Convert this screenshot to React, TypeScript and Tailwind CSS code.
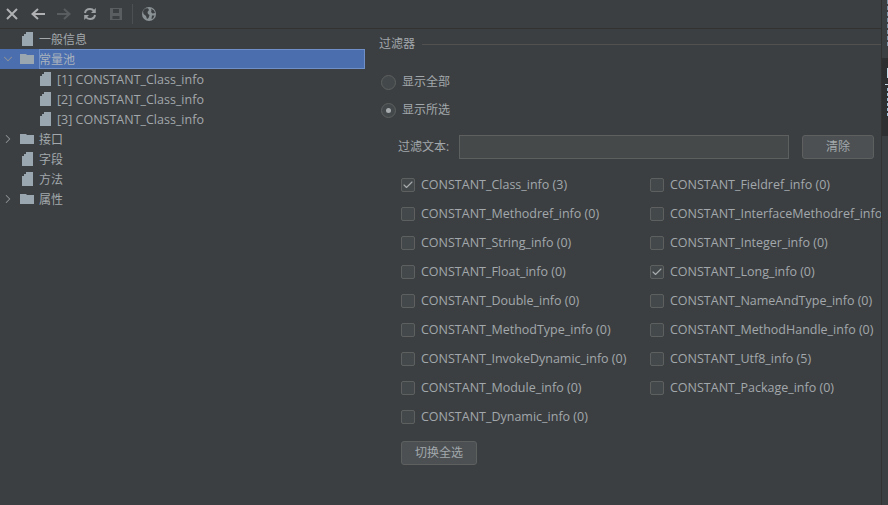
import { Check, ChevronDown, ChevronRight } from "lucide-react";

const font = "font-['Open_Sans','Noto_Sans_CJK_SC',sans-serif]";

function FileIcon() {
  return (
    <svg width="11" height="14" viewBox="0 0 11 14" className="shrink-0">
      <path d="M4 0H11V14H0V4H2V2H4Z" fill="#9aa7b0" />
    </svg>
  );
}
function FolderIcon() {
  return (
    <svg width="14" height="10" viewBox="0 0 14 10" className="shrink-0">
      <path d="M0 0H6L7 1H14V10H0Z" fill="#9aa7b0" />
    </svg>
  );
}

function ToolbarIcons() {
  return (
    <>
      <svg width="26" height="16" viewBox="0 0 26 16" className="-ml-[1px]">
        <path d="M8 3L18 13M18 3L8 13" stroke="#afb1b3" strokeWidth="2" fill="none" />
      </svg>
      <svg width="26" height="16" viewBox="0 0 26 16">
        <path d="M20 8H8M13 3L7.5 8L13 13" stroke="#afb1b3" strokeWidth="2" fill="none" />
      </svg>
      <svg width="26" height="16" viewBox="0 0 26 16">
        <path d="M6 8H18M13 3L18.5 8L13 13" stroke="#5a5d5f" strokeWidth="2" fill="none" />
      </svg>
      <svg width="26" height="16" viewBox="0 0 26 16">
        <path d="M8 7C8.4 4.5 10.5 3 13 3C14.8 3 16.2 3.8 17 5M18 9C17.6 11.5 15.5 13 13 13C11.2 13 9.8 12.2 9 11" stroke="#9da1a3" strokeWidth="2" fill="none" />
        <path d="M18.8 2V7H14ZM7.2 14V9H12Z" fill="#9da1a3" />
      </svg>
      <svg width="26" height="16" viewBox="0 0 26 16">
        <path d="M7 2H19V14H7ZM10 3V7H16V3ZM9.5 10V13H16.5V10Z" fill="#5a5e60" fillRule="evenodd" />
      </svg>
      <div className="ml-[3px] mr-[9px] h-[20px] w-px bg-[#4d5052]" />
      <svg width="14" height="14" viewBox="0 0 14 14" className="shrink-0">
        <circle cx="7" cy="7" r="7" fill="#8a9296" />
        <path d="M3 1.5L6 1.2L7 3L5.5 5L6 7L7.5 8L6.5 11L5 12L4 9L1.5 7L1 4ZM9 1.5L12 3.5L13 6L10.5 6.5L9 5L9.5 3.5ZM10 8.5L12.5 8.5L11 11.5L9.5 12Z" fill="#3c3f41" />
      </svg>
    </>
  );
}

function TreeRow({ label, level = 0, kind, expand, selected }: { label: string; level?: number; kind: "file" | "folder"; expand?: "open" | "closed"; selected?: boolean }) {
  return (
    <div className={`flex h-5 items-center ${selected ? "bg-[#4b6eaf]" : ""}`}>
      <div className="flex w-[16px] shrink-0 items-center justify-center">
        {expand === "open" && <ChevronDown size={14} strokeWidth={1.8} color="#8f9396" />}
        {expand === "closed" && <ChevronRight size={14} strokeWidth={1.8} color="#8f9396" />}
      </div>
      <div className={`flex items-center ${level === 1 ? "w-[41px] pl-[24px]" : kind === "file" ? "w-[23px] pl-[6px]" : "w-[23px] pl-[4px]"}`}>
        {kind === "file" ? <FileIcon /> : <FolderIcon />}
      </div>
      <span className={`h-5 whitespace-nowrap pt-[1px] leading-[20px] ${level === 1 ? "text-[12.5px]" : "text-[12px]"} ${selected ? "flex-1 text-[#a9b3bd] outline outline-1 -outline-offset-1 outline-[#6f8fc9]" : "text-[#a2a8ac]"}`}>{label}</span>
    </div>
  );
}

function Radio({ label, checked }: { label: string; checked?: boolean }) {
  return (
    <div className="flex h-[28px] items-center gap-[6px]">
      <div className="flex h-[15px] w-[15px] items-center justify-center rounded-full border border-[#5e6060] bg-[#43494a]">
        {checked && <div className="h-[5px] w-[5px] rounded-full bg-[#a8adb0]" />}
      </div>
      <span className="text-[12px] text-[#a2a8ac]">{label}</span>
    </div>
  );
}

function Option({ label, checked }: { label: string; checked?: boolean }) {
  return (
    <div className="flex h-[29px] items-center gap-[6px] whitespace-nowrap">
      <div className="flex h-[14px] w-[14px] shrink-0 items-center justify-center rounded-[2px] border border-[#5e6060] bg-[#43494a]">
        {checked && <Check size={12} strokeWidth={2.2} color="#a9adaf" />}
      </div>
      <span className="pt-[2px] text-[12.5px] text-[#a2a8ac]">{label}</span>
    </div>
  );
}

const left = [
  ["CONSTANT_Class_info (3)", true],
  ["CONSTANT_Methodref_info (0)"],
  ["CONSTANT_String_info (0)"],
  ["CONSTANT_Float_info (0)"],
  ["CONSTANT_Double_info (0)"],
  ["CONSTANT_MethodType_info (0)"],
  ["CONSTANT_InvokeDynamic_info (0)"],
  ["CONSTANT_Module_info (0)"],
  ["CONSTANT_Dynamic_info (0)"],
] as [string, boolean?][];
const right = [
  ["CONSTANT_Fieldref_info (0)"],
  ["CONSTANT_InterfaceMethodref_info"],
  ["CONSTANT_Integer_info (0)"],
  ["CONSTANT_Long_info (0)", true],
  ["CONSTANT_NameAndType_info (0)"],
  ["CONSTANT_MethodHandle_info (0)"],
  ["CONSTANT_Utf8_info (5)"],
  ["CONSTANT_Package_info (0)"],
] as [string, boolean?][];

export default function App() {
  return (
    <div className={`${font} relative flex h-[505px] w-[888px] flex-col overflow-hidden bg-[#3c3f41]`}>
      <div className="flex h-[29px] shrink-0 items-center border-b border-[#323232]">
        <ToolbarIcons />
      </div>
      <div className="flex min-h-0 flex-1">
        <div className="w-[365px] shrink-0">
          <TreeRow label="一般信息" kind="file" />
          <TreeRow label="常量池" kind="folder" expand="open" selected />
          <TreeRow label="[1] CONSTANT_Class_info" kind="file" level={1} />
          <TreeRow label="[2] CONSTANT_Class_info" kind="file" level={1} />
          <TreeRow label="[3] CONSTANT_Class_info" kind="file" level={1} />
          <TreeRow label="接口" kind="folder" expand="closed" />
          <TreeRow label="字段" kind="file" />
          <TreeRow label="方法" kind="file" />
          <TreeRow label="属性" kind="folder" expand="closed" />
        </div>
        <div className="min-w-0 flex-1 pl-[14px]">
          <div className="mt-[7px] flex h-[16px] items-center gap-[7px]">
            <span className="text-[12px] text-[#a2a8ac]">过滤器</span>
            <div className="h-px flex-1 bg-[#515151]" />
          </div>
          <div className="ml-[2px] mt-[16px]">
            <Radio label="显示全部" />
            <Radio label="显示所选" checked />
          </div>
          <div className="ml-[19px] mt-[11px] flex items-center">
            <span className="w-[61px] text-[12px] text-[#a2a8ac]">过滤文本:</span>
            <div className="h-[24px] w-[330px] border border-[#5e6060] bg-[#45494a]" />
            <div className="ml-[13px] flex h-[24px] w-[72px] items-center justify-center rounded-[3px] border border-[#5e6060] bg-[#4c5052] text-[12px] text-[#a2a8ac]">清除</div>
          </div>
          <div className="ml-[22px] mt-[11px] flex">
            <div className="w-[249px] shrink-0">
              {left.map(([l, c]) => <Option key={l} label={l} checked={c} />)}
            </div>
            <div>
              {right.map(([l, c]) => <Option key={l} label={l} checked={c} />)}
            </div>
          </div>
          <div className="ml-[22px] mt-[10px] flex h-[24px] w-[76px] items-center justify-center rounded-[3px] border border-[#5e6060] bg-[#4c5052] text-[12px] text-[#a2a8ac]">切换全选</div>
        </div>
      </div>
      <div className="absolute right-0 top-0 flex h-full w-[7px] flex-col border-l border-[#323232] bg-[#3c3f41]">
        <svg width="6" height="48" viewBox="0 0 6 48" className="shrink-0">
          <path d="M5.5 0V47" stroke="#7f97a8" strokeDasharray="4 2" fill="none" />
        </svg>
        <div className="mt-[10px] h-[78px] bg-[#2d2f30]">
          <svg width="6" height="78" viewBox="0 0 6 78">
            <path d="M5 10H6V20H5ZM3 26H6V27H3Z" fill="#c4dae8" />
            <path d="M5.5 30V58" stroke="#9fc4dc" strokeDasharray="3 2" fill="none" />
          </svg>
        </div>
      </div>
    </div>
  );
}
